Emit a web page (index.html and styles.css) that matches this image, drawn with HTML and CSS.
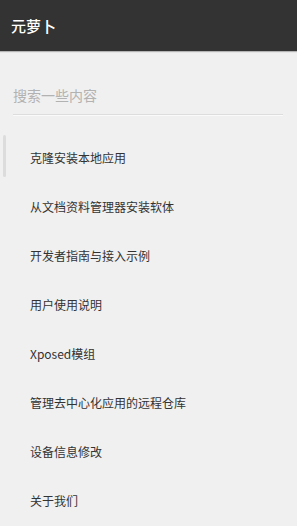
FILE: index.html
```html
<!DOCTYPE html>
<html lang="zh">
<head>
<meta charset="utf-8">
<title>元萝卜</title>
<link rel="stylesheet" href="styles.css">
</head>
<body>
<header class="appbar"><span class="title">元萝卜</span></header>
<main class="content">
  <div class="search"><span class="placeholder">搜索一些内容</span></div>
  <ul class="menu">
    <li>克隆安装本地应用</li>
    <li>从文档资料管理器安装软体</li>
    <li>开发者指南与接入示例</li>
    <li>用户使用说明</li>
    <li>Xposed模组</li>
    <li>管理去中心化应用的远程仓库</li>
    <li>设备信息修改</li>
    <li>关于我们</li>
  </ul>
  <div class="scrollbar"></div>
</main>
</body>
</html>
```
FILE: styles.css
```css
html, body {
  margin: 0;
  padding: 0;
  background: #f0f0f0;
  font-family: "Noto Sans CJK SC", "Noto Sans", sans-serif;
}
.appbar {
  height: 51px;
  background: #333333;
  display: flex;
  align-items: center;
  padding-left: 11px;
  box-shadow: 0 1px 1px rgba(0,0,0,0.25);
}
.title {
  color: #ffffff;
  font-size: 15px;
  font-weight: 500;
  line-height: 20px;
}
.content {
  position: relative;
  padding-top: 31px;
}
.search {
  margin: 0 14px 0 13px;
  height: 20px;
  padding-bottom: 12px;
  border-bottom: 1px solid #dddddd;
  box-shadow: 0 1px 0 #fafafa;
}
.placeholder {
  font-size: 14px;
  line-height: 20px;
  color: #b2b2b2;
}
.menu {
  list-style: none;
  margin: 18px 0 0 0;
  padding: 0;
}
.menu li {
  height: 49px;
  line-height: 49px;
  padding-left: 30px;
  font-size: 12px;
  color: #333333;
}
.scrollbar {
  position: absolute;
  left: 3px;
  top: 84px;
  width: 3px;
  height: 42px;
  border-radius: 2px;
  background: #dcdcdc;
}
```
